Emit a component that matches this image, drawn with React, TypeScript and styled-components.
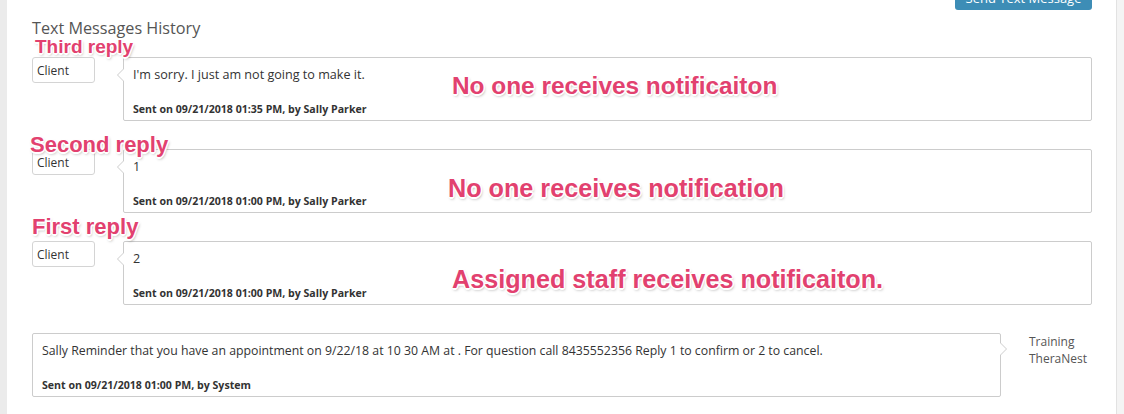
import React from "react";
import styled, { createGlobalStyle } from "styled-components";

const Global = createGlobalStyle`
  html, body { margin: 0; padding: 0; background: #fff; }
  body { font-family: "Open Sans", "Liberation Sans", sans-serif; color: #333; overflow: hidden; }
`;

const Page = styled.div`
  display: flex;
  width: 1124px;
  height: 414px;
  position: relative;
  overflow: hidden;
`;

const LeftRail = styled.div`
  width: 7px;
  flex: none;
  background: #ebebeb;
`;

const RightRail = styled.div`
  width: 7px;
  flex: none;
  background: #f4f4f4;
  border-left: 1px solid #e2e2e2;
`;

const Main = styled.div`
  flex: 1;
  padding: 0 24px 0 25px;
  display: flex;
  flex-direction: column;
`;

const Header = styled.div`
  display: flex;
  justify-content: flex-end;
`;

const PrimaryButton = styled.button`
  margin-top: -19px;
  width: 137px;
  padding: 8px 0 3px;
  line-height: 18px;
  font-family: "Open Sans", sans-serif;
  font-size: 13px;
  color: #fff;
  background: #3d8db6;
  border: none;
  border-radius: 3px;
`;

const Title = styled.h2`
  margin: 7px 0 18px;
  font-size: 16.2px;
  line-height: 22px;
  font-weight: 400;
  color: #555;
`;

const Thread = styled.div`
  display: flex;
  flex-direction: column;
  gap: 28px;
`;

const Row = styled.div`
  display: flex;
  align-items: flex-start;
  gap: 28px;
`;

const Sender = styled.div`
  width: 63px;
  height: 26px;
  box-sizing: border-box;
  flex: none;
  border: 1px solid #d4d4d4;
  border-radius: 3px;
  padding: 1px 4px 0;
  font-size: 12px;
  line-height: 24px;
  color: #333;
`;

const StaffLabel = styled.div`
  width: 63px;
  flex: none;
  font-size: 12px;
  line-height: 17px;
  color: #555;
`;

const Bubble = styled.div<{ $side: "left" | "right"; $arrowTop: number }>`
  position: relative;
  flex: 1;
  height: 64px;
  box-sizing: border-box;
  border: 1px solid #cccccc;
  border-radius: 2px;
  padding: 8px 9px 0;
  display: flex;
  flex-direction: column;

  &::before, &::after {
    content: "";
    position: absolute;
    top: ${(p) => p.$arrowTop}px;
    width: 0;
    height: 0;
    border-style: solid;
  }
  &::before {
    ${(p) => (p.$side === "left" ? "left: -7px;" : "right: -7px;")}
    border-width: 7px;
    ${(p) =>
      p.$side === "left"
        ? "border-color: transparent #cccccc transparent transparent; border-left-width: 0;"
        : "border-color: transparent transparent transparent #cccccc; border-right-width: 0;"}
  }
  &::after {
    ${(p) => (p.$side === "left" ? "left: -6px;" : "right: -6px;")}
    margin-top: 1px;
    border-width: 6px;
    ${(p) =>
      p.$side === "left"
        ? "border-color: transparent #fff transparent transparent; border-left-width: 0;"
        : "border-color: transparent transparent transparent #fff; border-right-width: 0;"}
  }
`;

const MessageText = styled.div<{ $size: number }>`
  font-size: ${(p) => p.$size}px;
  line-height: 18px;
  color: #333;
`;

const Meta = styled.div`
  margin-top: auto;
  margin-bottom: 4px;
  font-size: 10.6px;
  line-height: 14px;
  font-weight: 700;
  color: #333;
`;

const Note = styled.div<{ $size: number }>`
  position: absolute;
  font-family: "Liberation Sans", Arial, sans-serif;
  font-weight: 700;
  font-size: ${(p) => p.$size}px;
  line-height: 1;
  color: #e2416f;
  white-space: nowrap;
  text-shadow:
    -1px -1px 0 #fff, 1px -1px 0 #fff, -1px 1px 0 #fff, 1px 1px 0 #fff,
    0 -1.5px 0 #fff, 0 1.5px 0 #fff, -1.5px 0 0 #fff, 1.5px 0 0 #fff,
    1px 2px 3px rgba(0, 0, 0, 0.35);
`;

type Reply = { text: string; meta: string };

const replies: Reply[] = [
  { text: "I'm sorry. I just am not going to make it.", meta: "Sent on 09/21/2018 01:35 PM, by Sally Parker" },
  { text: "1", meta: "Sent on 09/21/2018 01:00 PM, by Sally Parker" },
  { text: "2", meta: "Sent on 09/21/2018 01:00 PM, by Sally Parker" },
];

const notes = [
  { text: "Third reply", x: 35, y: 37, size: 19 },
  { text: "Second reply", x: 30, y: 134, size: 22 },
  { text: "First reply", x: 32, y: 216, size: 22 },
  { text: "No one receives notificaiton", x: 452, y: 74, size: 24.4 },
  { text: "No one receives notification", x: 448, y: 176, size: 25.2 },
  { text: "Assigned staff receives notificaiton.", x: 452, y: 267, size: 25.2 },
];

export default function App() {
  return (
    <>
      <Global />
      <Page>
        <LeftRail />
        <Main>
          <Header>
            <PrimaryButton>Send Text Message</PrimaryButton>
          </Header>
          <Title>Text Messages History</Title>
          <Thread>
            {replies.map((r, i) => (
              <Row key={i}>
                <Sender>Client</Sender>
                <Bubble $side="left" $arrowTop={10}>
                  <MessageText $size={12.6}>{r.text}</MessageText>
                  <Meta>{r.meta}</Meta>
                </Bubble>
              </Row>
            ))}
            <Row>
              <Bubble $side="right" $arrowTop={8}>
                <MessageText $size={12.3}>
                  Sally Reminder that you have an appointment on 9/22/18 at 10 30 AM at . For question call 8435552356 Reply 1 to confirm or 2 to cancel.
                </MessageText>
                <Meta>Sent on 09/21/2018 01:00 PM, by System</Meta>
              </Bubble>
              <StaffLabel>
                Training
                <br />
                TheraNest
              </StaffLabel>
            </Row>
          </Thread>
        </Main>
        <RightRail />
        {notes.map((n) => (
          <Note key={n.text} $size={n.size} style={{ left: n.x, top: n.y }}>
            {n.text}
          </Note>
        ))}
      </Page>
    </>
  );
}
